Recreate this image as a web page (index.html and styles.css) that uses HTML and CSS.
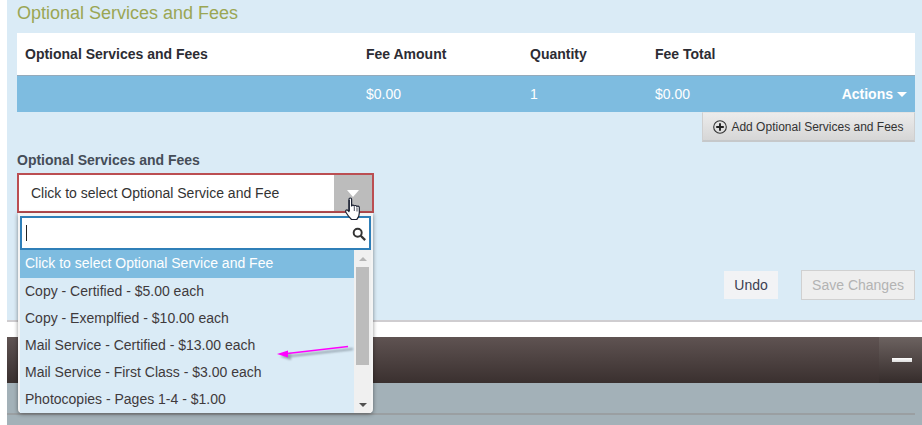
FILE: index.html
```html
<!DOCTYPE html>
<html lang="en">
<head>
<meta charset="utf-8">
<title>Optional Services and Fees</title>
<link rel="stylesheet" href="styles.css">
</head>
<body>
<div class="page">
  <section class="panel">
    <h2 class="title">Optional Services and Fees</h2>
    <div class="table">
      <div class="row head">
        <div class="c name">Optional Services and Fees</div>
        <div class="c amount">Fee Amount</div>
        <div class="c qty">Quantity</div>
        <div class="c total">Fee Total</div>
      </div>
      <div class="row data">
        <div class="c name"></div>
        <div class="c amount">$0.00</div>
        <div class="c qty">1</div>
        <div class="c total">$0.00</div>
        <div class="actions">Actions<span class="caret"></span></div>
      </div>
    </div>
    <div class="add-row">
      <button class="add" type="button">
        <svg class="plus" width="14" height="14" viewBox="0 0 14 14"><circle cx="7" cy="7" r="6.3" fill="none" stroke="#333" stroke-width="1.1"/><path d="M7 3.2v7.6M3.2 7h7.6" stroke="#222" stroke-width="1.9"/></svg>
        Add Optional Services and Fees
      </button>
    </div>
    <label class="label">Optional Services and Fees</label>
    <div class="select-wrap">
      <div class="select">
        <span class="select-text">Click to select Optional Service and Fee</span>
        <span class="select-btn"><span class="select-caret"></span></span>
      </div>
      <div class="dropdown">
        <div class="search">
          <span class="text-cursor"></span>
          <svg class="mag" width="14" height="14" viewBox="0 0 16 16"><circle cx="6.5" cy="6.5" r="4.6" fill="none" stroke="#333" stroke-width="2.2"/><path d="M10 10l5 5" stroke="#333" stroke-width="2.6"/></svg>
        </div>
        <div class="list-wrap">
          <ul class="list">
            <li class="selected">Click to select Optional Service and Fee</li>
            <li>Copy - Certified - $5.00 each</li>
            <li>Copy - Exemplfied - $10.00 each</li>
            <li>Mail Service - Certified - $13.00 each</li>
            <li>Mail Service - First Class - $3.00 each</li>
            <li>Photocopies - Pages 1-4 - $1.00</li>
          </ul>
          <div class="scrollbar">
            <span class="sb-up"></span>
            <span class="sb-thumb"></span>
            <span class="sb-down"></span>
          </div>
        </div>
      </div>
      <svg class="hand" width="18" height="24" viewBox="0 0 18 24"><path d="M5 2.2c0-1.6 2.600-1.600 2.600 0V9c.3-1.200 2.500-1.200 2.700.2.300-1 2.400-1 2.600.4.400-.8 2.400-.6 2.400 1V16c0 3-1.500 5.500-2.500 6.500H7.500C6 21 3.500 18 2 15.500.8 13.500 2.600 12.300 4 13.500l1 1z" fill="#fff" stroke="#1c2233" stroke-width="1.200" stroke-linejoin="round"/><path d="M5.200 3v11" stroke="#1c2233" stroke-width="1.300"/><path d="M10.300 10v4M13 10.500V14.500" stroke="#1c2233" stroke-width=".8"/></svg>
    </div>
    <div class="form-actions">
      <button class="undo" type="button">Undo</button>
      <button class="save" type="button" disabled>Save Changes</button>
    </div>
  </section>
  <div class="gap"></div>
  <div class="bar"><button class="collapse" type="button" aria-label="Collapse"><span class="minus"></span></button></div>
  <div class="lower"><div class="lower-line"></div></div>
</div>
<svg class="arrow" width="90" height="24" viewBox="0 0 90 24">
  <g class="arrow-shadow">
    <path d="M9 16.500L76 9" stroke="#5a6672" stroke-width="2.200" fill="none"/>
    <path d="M3 16.500L14 13V20z" fill="#5a6672"/>
  </g>
  <path d="M6 14L71 6.500" stroke="#f0f" stroke-width="1.500" fill="none"/>
  <path d="M0 14L11 10.500V17.500z" fill="#f0f"/>
</svg>
</body>
</html>
```
FILE: styles.css
```css
* { box-sizing: border-box; }
html, body { margin: 0; height: 425px; overflow: hidden; background: #fff; }
body { font-family: "Liberation Sans", Arial, sans-serif; color: #333; font-size: 14px; }
.page { padding-left: 7px; }
.panel { position: relative; height: 322px; background: #daebf6; border-bottom: 2px solid #cfcdd0; padding: 0 7px 0 10px; }
.title { margin: 0; height: 33px; font-size: 18px; line-height: 27px; font-weight: 400; color: #9aa654; }
.table { width: 898px; }
.row { display: flex; }
.head { height: 43px; background: #fff; border-bottom: 1px solid #94aabb; font-weight: 700; color: #2c2c33; line-height: 42px; font-size: 14px; }
.data { height: 36px; background: #7ebce0; color: #fff; line-height: 37px; font-size: 14px; position: relative; }
.c.name { width: 349px; padding-left: 8px; }
.c.amount { width: 164px; }
.c.qty { width: 125px; }
.c.total { width: 120px; }
.actions { margin-left: auto; padding-right: 8px; font-weight: 700; display: flex; align-items: center; }
.caret { width: 0; height: 0; margin-left: 4px; border-left: 5px solid transparent; border-right: 5px solid transparent; border-top: 5px solid #fff; }
.add-row { width: 898px; display: flex; justify-content: flex-end; }
.add { width: 213px; height: 30px; padding: 0; display: flex; align-items: center; justify-content: center; gap: 4px; font: 12px "Liberation Sans", Arial, sans-serif; color: #333; background: linear-gradient(#ececec, #d6d6d6); border: 1px solid #cfcfcf; border-top-color: #e3e3e3; border-bottom: 2px solid #c6c8ca; }
.label { display: block; margin-top: 11px; height: 20px; font-weight: 700; font-size: 14px; line-height: 15px; color: #454d58; }
.select-wrap { position: relative; width: 357px; }
.select { display: flex; height: 40px; background: #fff; border: 2px solid #bb4e52; }
.select-text { flex: 1; padding-left: 12px; line-height: 37px; font-size: 14px; color: #333; }
.select-btn { width: 38px; background: #bcbcbc; display: flex; justify-content: center; padding-top: 15px; }
.select-caret { width: 0; height: 0; border-left: 6.500px solid transparent; border-right: 6.500px solid transparent; border-top: 7px solid #fff; }
.dropdown { position: absolute; left: 1px; top: 40px; width: 355px; height: 200px; background: #f4f4f4; padding: 3px 2px 0 2px; box-shadow: 0 1px 4px rgba(0,0,0,.45); border-radius: 0 0 4px 4px; z-index: 2; }
.search { position: relative; height: 34px; width: 351px; background: #fff; border: 2px solid #2f7fb8; }
.text-cursor { position: absolute; left: 4px; top: 7px; width: 1px; height: 16px; background: #222; }
.mag { position: absolute; right: 3px; top: 9px; }
.list-wrap { display: flex; height: 163px; }
.list { list-style: none; margin: 0; padding: 0; width: 334px; height: 163px; background: #daebf6; overflow: hidden; font-size: 14px; color: #3f3a3c; }
.list li { height: 27px; line-height: 26px; padding-left: 5px; white-space: nowrap; }
.list li.selected { height: 28px; background: #7ebce0; color: #fff; line-height: 27px; }
.scrollbar { position: relative; flex: 1; background: #f0f0f0; }
.sb-up, .sb-down { position: absolute; left: 5px; width: 0; height: 0; border-left: 4px solid transparent; border-right: 4px solid transparent; }
.sb-up { top: 7px; border-bottom: 4px solid #b5b5b5; }
.sb-down { bottom: 6px; border-top: 4px solid #505050; }
.sb-thumb { position: absolute; left: 2px; top: 17px; width: 13px; height: 98px; background: #bcbcbc; }
.hand { position: absolute; left: 327px; top: 24px; z-index: 3; }
.form-actions { position: absolute; right: 7px; top: 270px; display: flex; align-items: flex-start; gap: 23px; }
.undo { width: 54px; height: 28px; margin-top: 1px; padding: 0; border: 0; background: #f2f3f5; color: #3b4050; font: 14px "Liberation Sans", Arial, sans-serif; }
.save { width: 114px; height: 30px; padding: 0; background: #eeeeee; border: 1px solid #d0d0d0; color: #b3b3b3; font: 14px "Liberation Sans", Arial, sans-serif; }
.gap { height: 15px; }
.bar { display: flex; justify-content: flex-end; height: 46px; background: linear-gradient(#5f5352, #3a302f); }
.collapse { width: 43px; padding: 0 0 0 3px; border: 0; display: flex; align-items: center; justify-content: center; background: linear-gradient(#6c6260, #352c2b); }
.minus { width: 20px; height: 4px; background: linear-gradient(#fff, #ddd); }
.lower { height: 42px; background: #a3b1b8; padding-top: 30px; }
.lower-line { width: 908px; height: 2px; background: #9a9fa2; }
.arrow { position: absolute; left: 277px; top: 340px; z-index: 5; }
.arrow-shadow { opacity: .55; filter: blur(1.2px); }
```
